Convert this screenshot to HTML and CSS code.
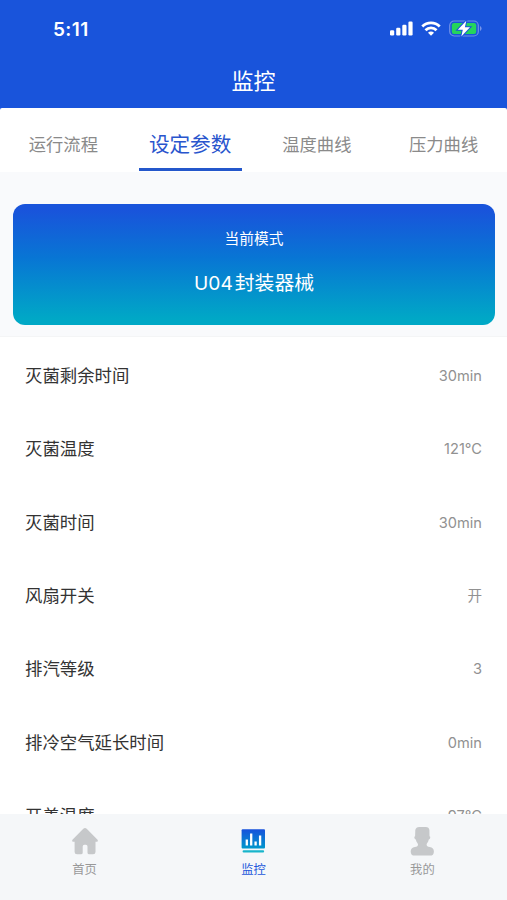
FILE: index.html
```html
<!DOCTYPE html>
<html lang="zh-CN">
<head>
    <meta charset="UTF-8">
    <meta name="viewport" content="width=device-width, initial-scale=1.0">
    <title>监控</title>
    <link rel="stylesheet" href="styles.css">
</head>
<body>
    <div class="app">
        <header class="header">
            <div class="status-bar">
                <span class="time">5:11</span>
                <div class="status-icons">
                    <svg width="23" height="15" viewBox="0 0 23 15" fill="#fff">
                        <rect x="0" y="9.3" width="4.2" height="5.2" rx="1.2"/>
                        <rect x="6.2" y="6.8" width="4.2" height="7.7" rx="1.2"/>
                        <rect x="12.3" y="3.8" width="4.2" height="10.7" rx="1.2"/>
                        <rect x="18.4" y="0.5" width="4.2" height="14" rx="1.2"/>
                    </svg>
                    <svg class="wifi" width="20" height="15" viewBox="0 0 20 15" fill="none" stroke="#fff" stroke-width="2.8">
                        <path d="M1.3 5.5a12.3 12.3 0 0 1 17.4 0"/>
                        <path d="M4.5 9.2a7.6 7.6 0 0 1 11 0"/>
                        <path d="M10 14.8l-3-3.1a4.2 4.2 0 0 1 6 0z" fill="#fff" stroke="none"/>
                    </svg>
                    <svg class="battery" width="33" height="17" viewBox="0 0 33 17">
                        <rect x="0.7" y="1" width="28.6" height="15" rx="4.5" fill="none" stroke="#6f8fe8" stroke-width="1.2"/>
                        <path d="M31 6v5q1.6-.8 1.6-2.5T31 6z" fill="#7795ea"/>
                        <rect x="2.8" y="3" width="24.4" height="11" rx="2.2" fill="#25d45c"/>
                        <path d="M17.3.8L8.8 9.7h5l-1.5 6.7 8.7-9.1h-5.1z" fill="#fff" stroke="#1954db" stroke-width="2" paint-order="stroke"/>
                    </svg>
                </div>
            </div>
            <h1 class="title">监控</h1>
        </header>

        <nav class="tabs">
            <a class="tab">运行流程</a>
            <a class="tab active">设定参数</a>
            <a class="tab">温度曲线</a>
            <a class="tab">压力曲线</a>
        </nav>

        <section class="mode">
            <div class="mode-card">
                <div class="mode-label">当前模式</div>
                <div class="mode-name"><span class="code">U04</span>封装器械</div>
            </div>
        </section>

        <ul class="params">
            <li><span class="name">灭菌剩余时间</span><span class="value">30min</span></li>
            <li><span class="name">灭菌温度</span><span class="value">121°C</span></li>
            <li><span class="name">灭菌时间</span><span class="value">30min</span></li>
            <li><span class="name">风扇开关</span><span class="value cn">开</span></li>
            <li><span class="name">排汽等级</span><span class="value">3</span></li>
            <li><span class="name">排冷空气延长时间</span><span class="value">0min</span></li>
            <li><span class="name">开盖温度</span><span class="value">97°C</span></li>
        </ul>

        <nav class="tabbar">
            <a class="tabbar-item">
                <svg width="28" height="30" viewBox="0 0 28 30" fill="#c6c8ca">
                    <path d="M13.3 2.7a2.5 2.5 0 0 1 3.4 0L27.3 13.500c1 1.100.6 2.200-.8 2.200h-1v10.200q0 2.400-2.400 2.400h-3.800q-1.800 0-1.800-1.500v-6.300q0-1.800-1.600-1.800h-1.600q-1.600 0-1.600 1.800v6.300q0 1.500-1.800 1.500H7q-2.400 0-2.400-2.400V15.700H3.500c-1.400 0-1.800-1.100-.8-2.200z"/>
                </svg>
                <span>首页</span>
            </a>
            <a class="tabbar-item active">
                <svg width="28" height="30" viewBox="0 0 28 30">
                    <defs>
                        <linearGradient id="chart" x1="0" y1="0" x2="0" y2="1">
                            <stop offset="0" stop-color="#1752dc"/>
                            <stop offset="1" stop-color="#0098cc"/>
                        </linearGradient>
                    </defs>
                    <rect x="2.6" y="3.3" width="23.4" height="19.2" rx="1" fill="url(#chart)"/>
                    <rect x="3.6" y="24.3" width="21.5" height="2.2" rx="1" fill="#18b5cb"/>
                    <path d="M7.8 13.500v6M12.200 7.500v12M16.600 15.500v4M21.100 9.500v10" stroke="#fff" stroke-width="2.300"/>
                </svg>
                <span>监控</span>
            </a>
            <a class="tabbar-item">
                <svg width="28" height="30" viewBox="0 0 28 30" fill="#c6c8ca">
                    <path d="M7.3 4Q8 .9 11.200.9h6.600q3.200 0 3.600 3.100l.1 6.200q1.100.3.700 1.800-.4 1.300-1.400 1.600-.4 2-1.700 3.600-.5.700-.5 1.500 0 1.600 1.700 2l1.400.3q4.200.8 4.200 4.400 0 4.200-4 4.200H6.700q-4 0-4-4.200 0-3.600 4.200-4.400l1.400-.3q1.700-.4 1.700-2 0-.8-.5-1.500-1.300-1.600-1.700-3.600-1-.3-1.400-1.600-.4-1.500.7-1.800z"/>
                </svg>
                <span>我的</span>
            </a>
        </nav>
    </div>
</body>
</html>
```

FILE: styles.css
```css
* {
    box-sizing: border-box;
}
body {
    margin: 0;
    font-family: Inter, "Noto Sans CJK SC", sans-serif;
    background-color: #1954db;
    color: #333;
}
.app {
    display: flex;
    flex-direction: column;
    height: 100vh;
    overflow: hidden;
}
.header {
    height: 108px;
    flex-shrink: 0;
    color: #fff;
}
.status-bar {
    display: flex;
    justify-content: space-between;
    align-items: center;
    height: 57px;
    padding: 0 25px 0 53px;
}
.time {
    padding-top: 1px;
    font-size: 19px;
    font-weight: 600;
    letter-spacing: 0.4px;
}
.status-icons {
    display: flex;
    align-items: center;
}
.wifi {
    margin-left: 8px;
}
.battery {
    margin-left: 8px;
}
.title {
    margin: 0;
    font-size: 22px;
    font-weight: 400;
    line-height: 48px;
    text-align: center;
}
.tabs {
    display: flex;
    height: 64px;
    flex-shrink: 0;
    background-color: #fff;
    border-radius: 2px 2px 0 0;
}
.tab {
    width: 25%;
    height: 63px;
    color: #8a8a8a;
    font-size: 17.3px;
    line-height: 74px;
    text-align: center;
}
.tab.active {
    color: #2955cd;
    font-size: 20.6px;
    background: linear-gradient(#2457cb, #2457cb) center bottom / 103px 3px no-repeat;
}
.mode {
    height: 165px;
    flex-shrink: 0;
    padding: 32px 12px 11px 13px;
    background-color: #f9fafc;
    border-bottom: 1px solid #f4f5f6;
}
.mode-card {
    height: 121px;
    padding-top: 22px;
    border-radius: 12px;
    background: linear-gradient(#1954db 5%, #0876d4 45%, #00a8c6 95%);
    color: #fff;
    text-align: center;
}
.mode-label {
    font-size: 14.7px;
    line-height: 26px;
}
.mode-name {
    margin-top: 16px;
    font-size: 19.8px;
    line-height: 30px;
}
.code {
    margin-right: 2px;
    font-size: 19.2px;
}
.params {
    flex: 1;
    min-height: 0;
    margin: 0;
    padding: 2px 25px 0;
    overflow: hidden;
    background-color: #fff;
    list-style: none;
}
.params li {
    display: flex;
    justify-content: space-between;
    align-items: center;
    height: 73.3px;
    font-size: 17.4px;
}
.params .name {
    padding-bottom: 2px;
}
.params .value {
    padding-top: 1px;
    color: #919191;
    font-size: 14.6px;
}
.params .value.cn {
    padding: 0 0 2px;
}
.tabbar {
    display: flex;
    height: 86px;
    flex-shrink: 0;
    background-color: #f5f7f9;
}
.tabbar-item {
    display: flex;
    flex-direction: column;
    align-items: center;
    width: 33.33%;
    padding-top: 12px;
    color: #999;
    font-size: 12.3px;
}
.tabbar-item.active {
    color: #2457db;
}
.tabbar-item span {
    margin-top: 4px;
    line-height: 20px;
}
```
